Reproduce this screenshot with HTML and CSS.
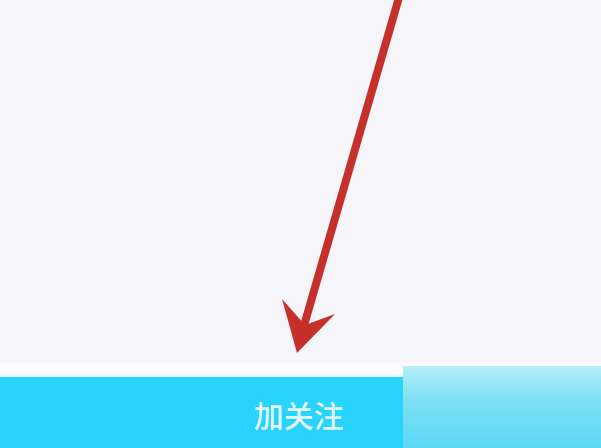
FILE: index.html
```html
<!DOCTYPE html>
<html lang="zh">
<head>
<meta charset="utf-8">
<link rel="stylesheet" href="styles.css">
</head>
<body>
<div class="screen">
  <div class="content">
    <svg class="arrow" width="601" height="362" viewBox="0 0 601 362">
      <line x1="400" y1="-6" x2="305" y2="322" stroke="#c6302b" stroke-width="8" stroke-linecap="round"/>
      <path d="M297 353 L282 299 L305 325 L335 314 Z" fill="#c6302b"/>
    </svg>
  </div>
  <div class="gap"></div>
  <div class="bar">
    <span class="follow">加关注</span>
  </div>
  <div class="overlay"></div>
</div>
</body>
</html>
```
FILE: styles.css
```css
html, body {
  margin: 0;
  padding: 0;
}
body {
  width: 601px;
  height: 448px;
  overflow: hidden;
  background: #f6f5fa;
  font-family: "Noto Sans CJK SC", "Noto Sans", sans-serif;
}
.screen {
  position: relative;
  display: flex;
  flex-direction: column;
  width: 601px;
  height: 448px;
}
.content {
  height: 362px;
  background: #f6f5fa;
  position: relative;
}
.arrow {
  position: absolute;
  left: 0;
  top: 0;
  display: block;
  filter: blur(0.7px);
}
.gap {
  height: 15px;
  background: linear-gradient(#fbfbfd, #ffffff 70%, #e6f8fc);
}
.bar {
  flex: 1;
  background: #28d4fc;
  display: flex;
  align-items: center;
  padding-left: 254px;
}
.follow {
  color: #e4f6fb;
  font-size: 30px;
  line-height: 30px;
  font-weight: 500;
  margin-top: 2px;
  filter: blur(0.4px);
}
.overlay {
  position: absolute;
  left: 403px;
  top: 366px;
  right: 0;
  bottom: 0;
  background: linear-gradient(#b4eef8, #7ee0f4 40%, #5cd8f4);
}
```
